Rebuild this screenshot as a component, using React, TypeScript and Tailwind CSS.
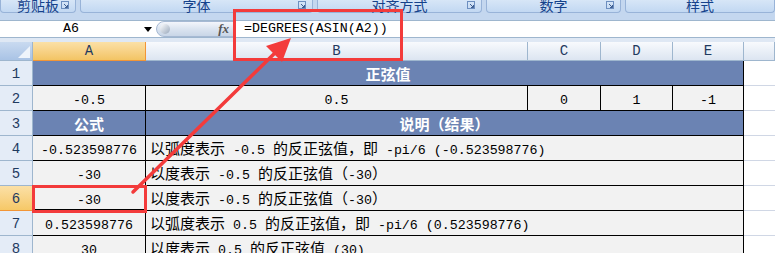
import * as React from "react";

// Splits a string into ASCII / CJK runs so the half-width glyphs get a mono face
function Mixed({ s, bold = false }: { s: string; bold?: boolean }) {
  const parts = s.split(/([\u0000-\u00ff]+)/).filter((p) => p.length > 0);
  return (
    <span className="whitespace-pre leading-none">
      {parts.map((p, i) =>
        /^[\u0000-\u00ff]+$/.test(p) ? (
          <span key={i} className={"font-['Liberation_Mono',monospace] text-[13.3px]" + (bold ? " font-bold" : "")}>
            {p}
          </span>
        ) : (
          <span key={i} className={"font-['Noto_Sans_CJK_SC',sans-serif] text-[15px]" + (bold ? " font-bold" : "")}>
            {p}
          </span>
        )
      )}
    </span>
  );
}

const groups = [
  { label: "剪贴板", w: "w-[76px]", launcher: true },
  { label: "字体", w: "w-[233px]", launcher: true },
  { label: "对齐方式", w: "w-[165px]", launcher: true },
  { label: "数字", w: "w-[135px]", launcher: true },
  { label: "样式", w: "flex-1", launcher: false },
];

function Launcher() {
  return (
    <svg width="8" height="8" viewBox="0 0 8 8" className="absolute right-[6px] top-[1px]">
      <rect x="0.5" y="0.5" width="7" height="7" fill="none" stroke="#6d8fc0" strokeWidth="1" />
      <path d="M3 3 L6.5 6.5 M4 6.5 H6.5 V4" stroke="#3f5f92" strokeWidth="1" fill="none" />
    </svg>
  );
}

const rowHead =
  "flex items-center justify-center bg-[#e4ecf7] border-r border-b border-[#9eb6ce] text-[#1f3a5f] font-['Liberation_Mono',monospace] text-[14px] pt-[3px]";
const rowHeadSel =
  "flex items-center justify-center bg-gradient-to-b from-[#fbe0a6] to-[#f6c866] border-r border-b border-[#f29536] text-[#1f3a5f] font-['Liberation_Mono',monospace] text-[14px] pt-[3px]";
const colHead =
  "flex items-center justify-center bg-gradient-to-b from-[#f8fafd] to-[#dce5f1] border-r border-b border-[#9eb6ce] text-[#1f3a5f] font-['Liberation_Mono',monospace] text-[14px]";
const cell = "flex items-center bg-[#f2f2f2] border-r border-b border-black text-black pt-[2px]";
const blue = "flex items-center justify-center bg-[#6b83b3] border-r border-b border-black text-white pt-[2px]";
const blank = "bg-white border-b border-[#d0d7e5]";

const rows: { n: number; a: string; b: string }[] = [
  { n: 4, a: "-0.523598776", b: "以弧度表示 -0.5 的反正弦值，即 -pi/6 (-0.523598776)" },
  { n: 5, a: "-30", b: "以度表示 -0.5 的反正弦值（-30）" },
  { n: 6, a: "-30", b: "以度表示 -0.5 的反正弦值（-30）" },
  { n: 7, a: "0.523598776", b: "以弧度表示 0.5 的反正弦值，即 -pi/6 (0.523598776)" },
  { n: 8, a: "30", b: "以度表示 0.5 的反正弦值 (30)" },
];

export default function App() {
  return (
    <div className="relative w-[775px] h-[253px] overflow-hidden bg-[#c4d7ef]">
      {/* Ribbon group labels */}
      <div className="flex gap-[4px] h-[14px] overflow-hidden">
        {groups.map((g) => (
          <div
            key={g.label}
            className={`relative ${g.w} h-[13px] bg-gradient-to-b from-[#d7e6f7] to-[#c2d8f2] border border-t-0 border-[#98b3d8] rounded-b-[4px] flex justify-center`}
          >
            <span className="font-['Noto_Sans_CJK_SC',sans-serif] text-[14px] leading-none text-[#15428b] -mt-[2px]">
              {g.label}
            </span>
            {g.launcher && <Launcher />}
          </div>
        ))}
      </div>
      <div className="h-[6px] bg-[#c4d7ef]" />

      {/* Formula bar */}
      <div className="flex h-[18px] bg-white border-y border-[#9eb6ce]">
        <div className="relative w-[156px] flex items-center">
          <span className="w-[142px] text-center font-['Liberation_Mono',monospace] text-[13.3px] text-black">A6</span>
          <svg width="8" height="5" viewBox="0 0 8 5" className="ml-[2px]">
            <path d="M0 0 H8 L4 5 Z" fill="#000" />
          </svg>
        </div>
        <div className="flex items-center w-[78px] h-[16px] rounded-l-full bg-gradient-to-b from-[#f3f6fb] via-[#dbe4f0] to-[#c9d6e7] border border-[#a6b9d3]">
          <span className="ml-[3px] w-[10px] h-[10px] rounded-full bg-gradient-to-br from-[#ffffff] to-[#9aa9bc]" />
          <span className="ml-auto mr-[4px] font-['Liberation_Serif',serif] italic font-bold text-[13px] text-[#555]">fx</span>
        </div>
        <div className="flex items-center pl-[10px] font-['Liberation_Mono',monospace] text-[13.3px] text-black">
          =DEGREES(ASIN(A2))
        </div>
      </div>
      <div className="h-[4px] bg-[#dfe8f4]" />

      {/* Sheet grid */}
      <div className="grid grid-cols-[33px_113px_382px_73px_72px_71px_1fr] grid-rows-[19px_25px_25px_25px_25px_25px_25px_25px_25px] bg-white">
        <div className="relative bg-gradient-to-b from-[#c9daf0] to-[#a9c3e5] border-r border-b border-[#9eb6ce]">
          <svg width="12" height="12" viewBox="0 0 12 12" className="absolute right-[2px] bottom-[2px]">
            <path d="M12 0 V12 H0 Z" fill="#eef4fb" />
          </svg>
        </div>
        <div className="flex items-center justify-center bg-gradient-to-b from-[#fbe0a6] to-[#f3c463] border-r border-b border-[#f29536] text-[#1f3a5f] font-['Liberation_Mono',monospace] text-[14px]">
          A
        </div>
        <div className={colHead}>B</div>
        <div className={colHead}>C</div>
        <div className={colHead}>D</div>
        <div className={colHead}>E</div>
        <div className={colHead} />

        {/* row 1 */}
        <div className={rowHead}>1</div>
        <div className={`${blue} col-span-5`}>
          <Mixed s="正弦值" bold />
        </div>
        <div className={blank} />

        {/* row 2 */}
        <div className={rowHead}>2</div>
        <div className={`${cell} justify-center`}><Mixed s="-0.5" /></div>
        <div className={`${cell} justify-center`}><Mixed s="0.5" /></div>
        <div className={`${cell} justify-center`}><Mixed s="0" /></div>
        <div className={`${cell} justify-center`}><Mixed s="1" /></div>
        <div className={`${cell} justify-center`}><Mixed s="-1" /></div>
        <div className={blank} />

        {/* row 3 */}
        <div className={rowHead}>3</div>
        <div className={blue}><Mixed s="公式" bold /></div>
        <div className={`${blue} col-span-4`}><Mixed s="说明（结果）" bold /></div>
        <div className={blank} />

        {rows.map((r) => (
          <React.Fragment key={r.n}>
            <div className={r.n === 6 ? rowHeadSel : rowHead}>{r.n}</div>
            <div className={`${cell} justify-center ${r.n === 6 ? "outline-2 -outline-offset-2 outline-black" : ""}`}>
              <Mixed s={r.a} />
            </div>
            <div className={`${cell} col-span-4 pl-[4px]`}>
              <Mixed s={r.b} />
            </div>
            <div className={blank} />
          </React.Fragment>
        ))}
      </div>

      {/* Annotation overlay */}
      <svg width="775" height="253" viewBox="0 0 775 253" className="absolute left-0 top-0 pointer-events-none">
        <rect x="234.5" y="10.5" width="167" height="49" fill="none" stroke="#f33b3b" strokeWidth="3" />
        <rect x="33.5" y="186.5" width="112" height="25" fill="none" stroke="#f33b3b" strokeWidth="3" />
        <line x1="133" y1="192" x2="278" y2="50" stroke="#f33b3b" strokeWidth="3.5" strokeLinecap="round" />
        <polygon points="291,38 282,62 266,46" fill="#f33b3b" />
      </svg>
    </div>
  );
}
